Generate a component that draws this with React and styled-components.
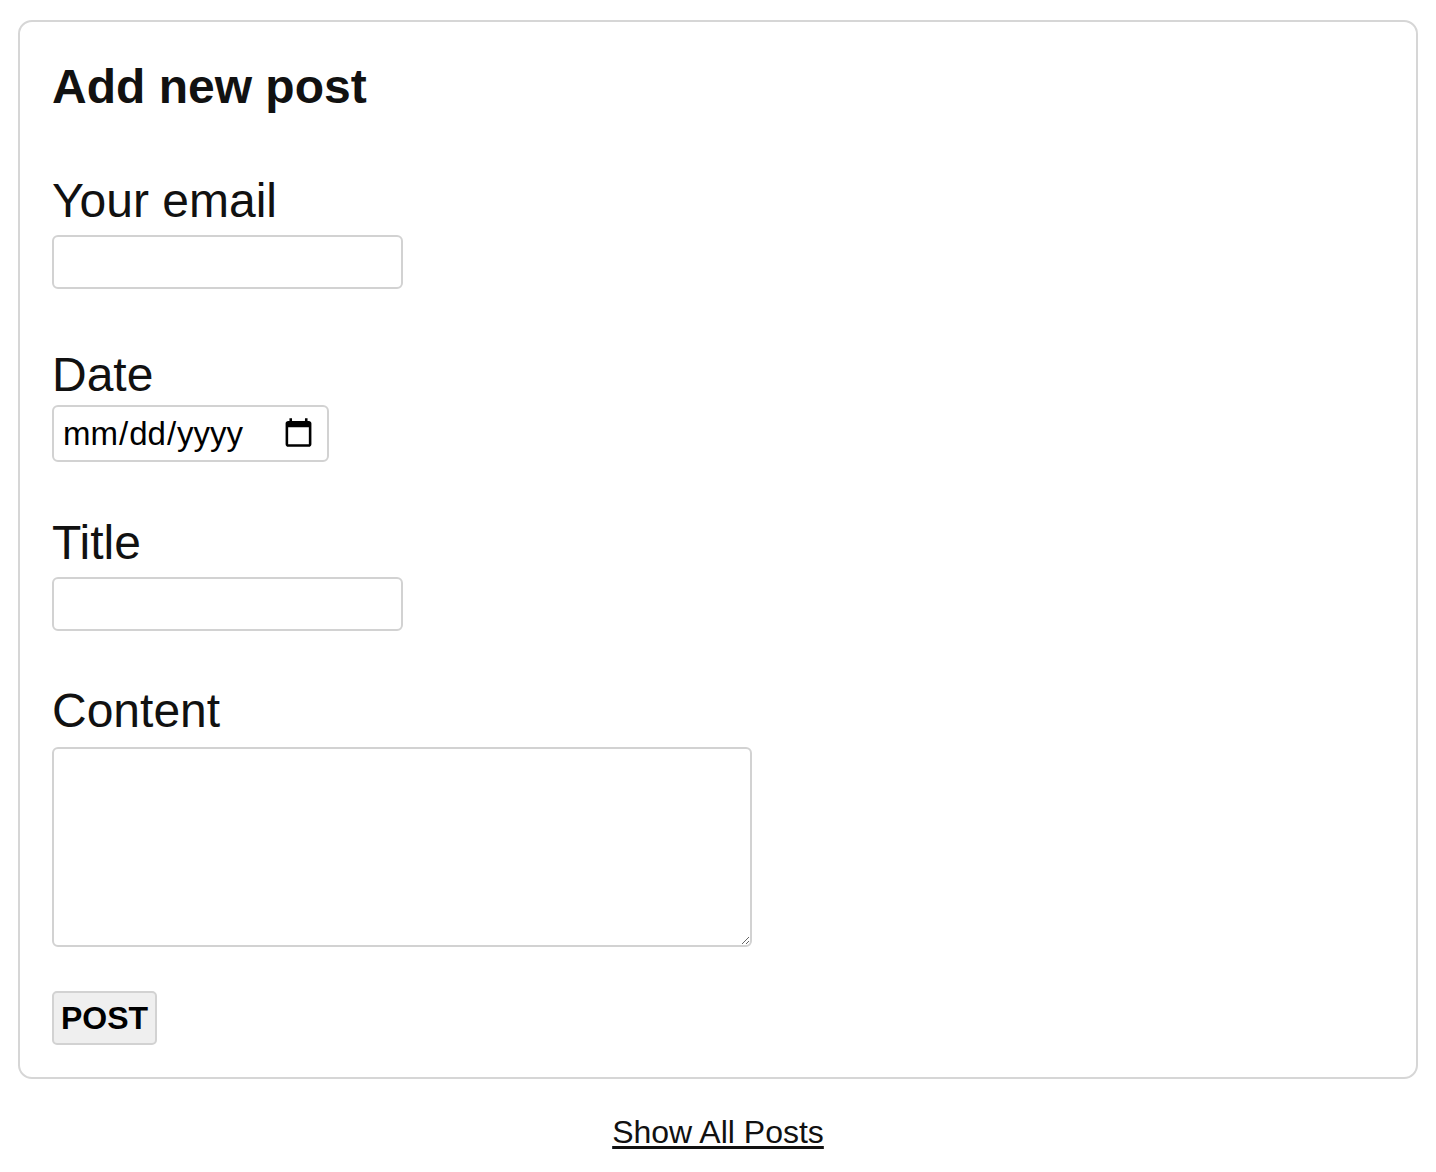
import React from 'react'
import styled, { createGlobalStyle } from 'styled-components'

const GlobalStyle = createGlobalStyle`
  html, body {
    margin: 0;
    padding: 0;
    background: #ffffff;
    font-family: "Liberation Sans", Arial, Helvetica, sans-serif;
    color: #111111;
  }
`

const Page = styled.div`
  display: flex;
  flex-direction: column;
  align-items: center;
  padding: 20px 18px 0;
`

const Card = styled.form`
  box-sizing: border-box;
  width: 100%;
  display: flex;
  flex-direction: column;
  align-items: flex-start;
  border: 2px solid #d6d6d6;
  border-radius: 14px;
  padding: 37px 32px 32px;
`

const Heading = styled.h2`
  margin: 0 0 58px;
  font-size: 48px;
  line-height: 56px;
  font-weight: 700;
`

const Field = styled.div`
  display: flex;
  flex-direction: column;
  align-items: flex-start;
  gap: ${p => p.$gap || 6}px;
  margin-bottom: ${p => p.$space || 54}px;
`

const Label = styled.label`
  font-size: 48px;
  line-height: 56px;
  font-weight: 400;
`

const TextInput = styled.input`
  box-sizing: border-box;
  width: 351px;
  height: 54px;
  border: 2px solid #d2d2d2;
  border-radius: 6px;
  padding: 0 8px;
  font-family: inherit;
  font-size: 32px;
  background: #fff;
  outline: none;
`

const DateInput = styled(TextInput)`
  width: 277px;
  height: 57px;
  color: #000;
  font-size: 33px;
  padding: 0 10px 0 8px;
`

const TextArea = styled.textarea`
  box-sizing: border-box;
  width: 700px;
  height: 200px;
  border: 2px solid #d2d2d2;
  border-radius: 6px;
  padding: 8px;
  font-family: inherit;
  font-size: 32px;
  outline: none;
  display: block;
`

const Button = styled.button`
  box-sizing: border-box;
  height: 54px;
  padding: 0 7px;
  border: 2px solid #d2d2d2;
  border-radius: 5px;
  background: #efefef;
  font-family: inherit;
  font-size: 32px;
  font-weight: 700;
  color: #000;
  cursor: pointer;
`

const ShowAll = styled.a`
  margin-top: 35px;
  font-size: 32px;
  line-height: 37px;
  color: #111;
  text-decoration: underline;
  text-underline-offset: 3px;
`

export default function App () {
  return (
    <>
      <GlobalStyle />
      <Page>
        <Card onSubmit={e => e.preventDefault()}>
          <Heading>Add new post</Heading>
          <Field $space={58}>
            <Label htmlFor='email'>Your email</Label>
            <TextInput id='email' type='email' />
          </Field>
          <Field $gap={2} $space={53}>
            <Label htmlFor='date'>Date</Label>
            <DateInput id='date' type='date' />
          </Field>
          <Field $space={52}>
            <Label htmlFor='title'>Title</Label>
            <TextInput id='title' type='text' />
          </Field>
          <Field $gap={8} $space={44}>
            <Label htmlFor='content'>Content</Label>
            <TextArea id='content' />
          </Field>
          <Button type='submit'>POST</Button>
        </Card>
        <ShowAll href='#'>Show All Posts</ShowAll>
      </Page>
    </>
  )
}
